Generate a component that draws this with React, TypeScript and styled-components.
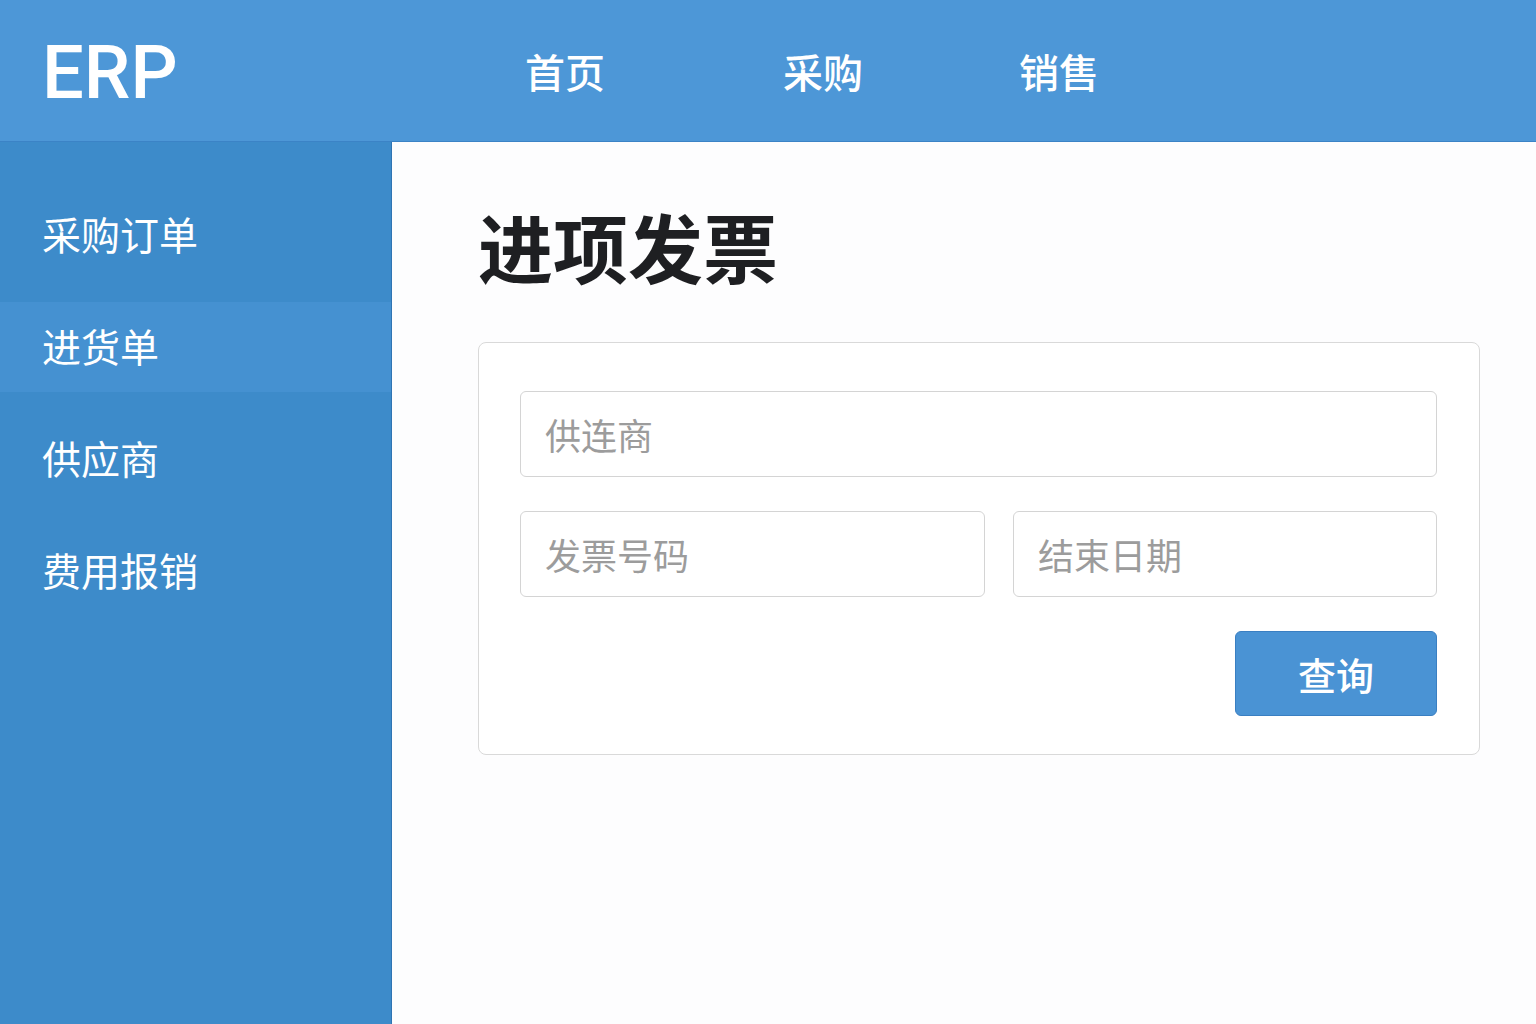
import React from "react";
import styled, { createGlobalStyle } from "styled-components";

const GlobalStyle = createGlobalStyle`
  html, body { margin: 0; padding: 0; }
  body {
    font-family: "Noto Sans CJK SC", "Noto Sans", sans-serif;
    background: #fdfdfe;
  }
  * { box-sizing: border-box; }
`;

const Page = styled.div`
  width: 1536px;
  height: 1024px;
  display: flex;
  flex-direction: column;
  overflow: hidden;
`;

const Header = styled.header`
  height: 142px;
  flex-shrink: 0;
  background: #4d97d7;
  border-bottom: 1px solid #3b83c6;
  display: flex;
  align-items: center;
  padding-left: 42px;
`;

const Logo = styled.div`
  width: 483px;
  font-family: Roboto, "Noto Sans", sans-serif;
  font-weight: 500;
  font-size: 74px;
  color: #ffffff;
  letter-spacing: 0;
  line-height: 1;
  margin-top: 4px;
`;

const Nav = styled.nav`
  display: grid;
  grid-template-columns: 258px 236px auto;
  align-items: center;
`;

const NavItem = styled.a`
  font-size: 40px;
  font-weight: 500;
  color: #ffffff;
  line-height: 1;
  text-decoration: none;
`;

const Body = styled.div`
  flex: 1;
  display: flex;
  min-height: 0;
`;

const Sidebar = styled.aside`
  width: 392px;
  flex-shrink: 0;
  background: #3d8bca;
  border-right: 1px solid #2f74b3;
  display: flex;
  flex-direction: column;
  gap: 22px;
  padding-top: 48px;
`;

const SideItem = styled.div<{ $active?: boolean }>`
  height: 90px;
  display: flex;
  align-items: center;
  padding: 0 0 4px 42px;
  font-size: 39px;
  color: #ffffff;
  background: ${(p) => (p.$active ? "#4591d1" : "transparent")};
`;

const Main = styled.main`
  flex: 1;
  background: #fdfdfe;
  padding: 54px 56px 0 86px;
  display: flex;
  flex-direction: column;
`;

const Title = styled.h1`
  margin: 0;
  font-size: 75px;
  font-weight: 700;
  color: #1e1f22;
  line-height: 100px;
  height: 100px;
`;

const Card = styled.section`
  margin-top: 46px;
  background: #ffffff;
  border: 1px solid #d9d9d9;
  border-radius: 8px;
  padding: 48px 42px 38px 41px;
  display: flex;
  flex-direction: column;
  gap: 34px;
`;

const Row = styled.div<{ $cols?: string }>`
  display: grid;
  grid-template-columns: ${(p) => p.$cols || "1fr"};
  gap: 28px;
`;

const Input = styled.input`
  height: 86px;
  width: 100%;
  border: 1px solid #d4d4d4;
  border-radius: 6px;
  background: #ffffff;
  padding: 0 24px;
  font-family: "Noto Sans CJK SC", "Noto Sans", sans-serif;
  font-size: 36px;
  color: #333;
  outline: none;
  &::placeholder {
    color: #9c9c9c;
  }
`;

const Actions = styled.div`
  display: flex;
  justify-content: flex-end;
`;

const Button = styled.button`
  width: 202px;
  height: 85px;
  background: #4a93d4;
  border: 1px solid #3a7fc2;
  border-radius: 6px;
  color: #ffffff;
  font-family: "Noto Sans CJK SC", "Noto Sans", sans-serif;
  font-size: 38px;
  font-weight: 500;
  cursor: pointer;
`;

export default function App() {
  const sideItems = ["采购订单", "进货单", "供应商", "费用报销"];
  return (
    <>
      <GlobalStyle />
      <Page>
        <Header>
          <Logo>ERP</Logo>
          <Nav>
            <NavItem>首页</NavItem>
            <NavItem>采购</NavItem>
            <NavItem>销售</NavItem>
          </Nav>
        </Header>
        <Body>
          <Sidebar>
            {sideItems.map((s) => (
              <SideItem key={s} $active={s === "进货单"}>
                {s}
              </SideItem>
            ))}
          </Sidebar>
          <Main>
            <Title>进项发票</Title>
            <Card>
              <Row>
                <Input placeholder="供连商" />
              </Row>
              <Row $cols="465px 1fr">
                <Input placeholder="发票号码" />
                <Input placeholder="结束日期" />
              </Row>
              <Actions>
                <Button>查询</Button>
              </Actions>
            </Card>
          </Main>
        </Body>
      </Page>
    </>
  );
}
